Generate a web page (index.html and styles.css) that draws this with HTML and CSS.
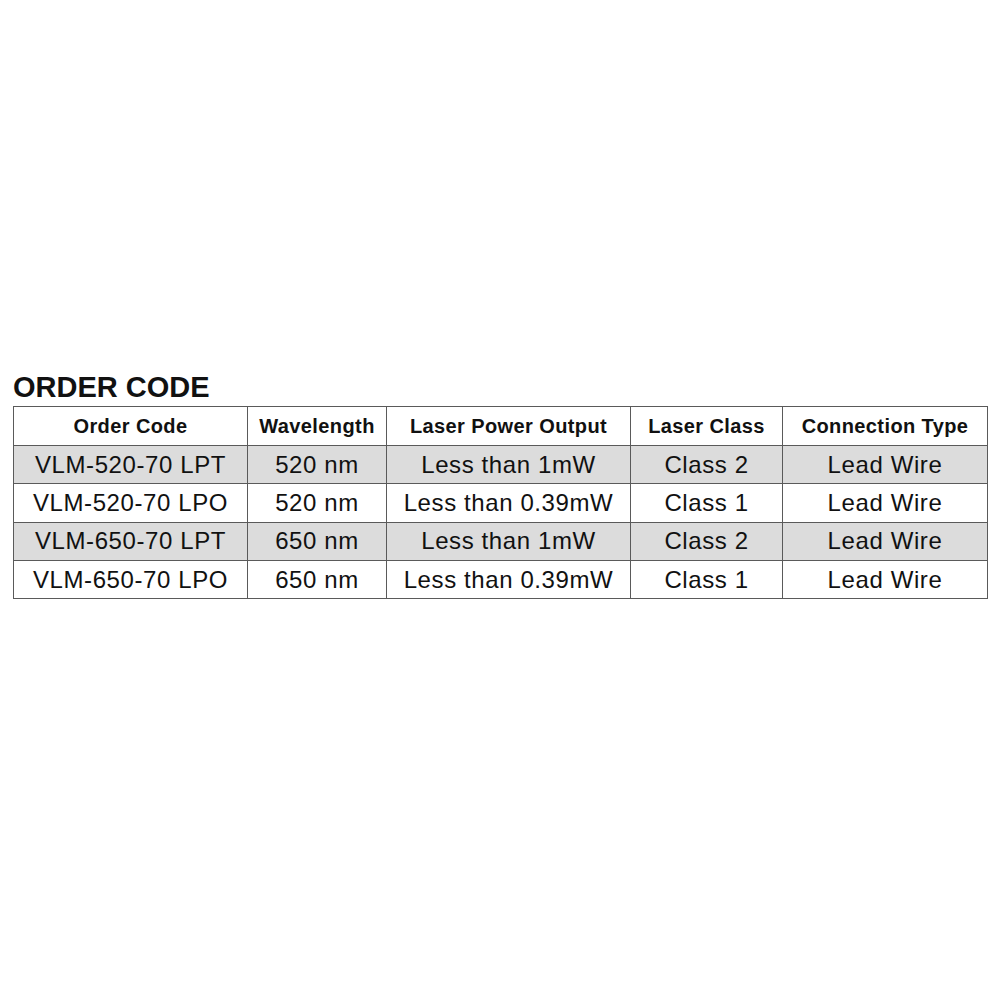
FILE: index.html
```html
<!DOCTYPE html>
<html>
<head>
<meta charset="utf-8">
<link rel="stylesheet" href="styles.css">
</head>
<body>
<div class="page">
  <h2 class="title">ORDER CODE</h2>
  <table class="codes">
    <colgroup>
      <col class="c1"><col class="c2"><col class="c3"><col class="c4"><col class="c5">
    </colgroup>
    <thead>
      <tr><th>Order Code</th><th>Wavelength</th><th>Laser Power Output</th><th>Laser Class</th><th>Connection Type</th></tr>
    </thead>
    <tbody>
      <tr class="shade"><td>VLM-520-70 LPT</td><td>520 nm</td><td>Less than 1mW</td><td>Class 2</td><td>Lead Wire</td></tr>
      <tr><td>VLM-520-70 LPO</td><td>520 nm</td><td>Less than 0.39mW</td><td>Class 1</td><td>Lead Wire</td></tr>
      <tr class="shade"><td>VLM-650-70 LPT</td><td>650 nm</td><td>Less than 1mW</td><td>Class 2</td><td>Lead Wire</td></tr>
      <tr><td>VLM-650-70 LPO</td><td>650 nm</td><td>Less than 0.39mW</td><td>Class 1</td><td>Lead Wire</td></tr>
    </tbody>
  </table>
</div>
</body>
</html>
```

FILE: styles.css
```css
html, body {
  margin: 0;
  padding: 0;
  background: #fff;
}
body {
  font-family: "Liberation Sans", Arial, sans-serif;
  color: #111;
}
.page {
  padding: 372px 12px 0 13px;
}
.title {
  margin: 0 0 4px 0;
  font-size: 29px;
  line-height: 30px;
  font-weight: bold;
  color: #111;
}
.codes {
  border-collapse: collapse;
  width: 975px;
  table-layout: fixed;
}
.c1 { width: 234px; }
.c2 { width: 139px; }
.c3 { width: 244px; }
.c4 { width: 152px; }
.c5 { width: 205px; }
.codes th, .codes td {
  border: 1px solid #5a5a5a;
  text-align: center;
  padding: 0;
  white-space: nowrap;
  overflow: hidden;
}
.codes th {
  height: 38px;
  font-size: 20px;
  font-weight: bold;
  letter-spacing: 0.4px;
}
.codes td {
  height: 37.3px;
  font-size: 24px;
  font-weight: normal;
  letter-spacing: 0.6px;
}
.shade td {
  background: #dcdcdc;
}
```
